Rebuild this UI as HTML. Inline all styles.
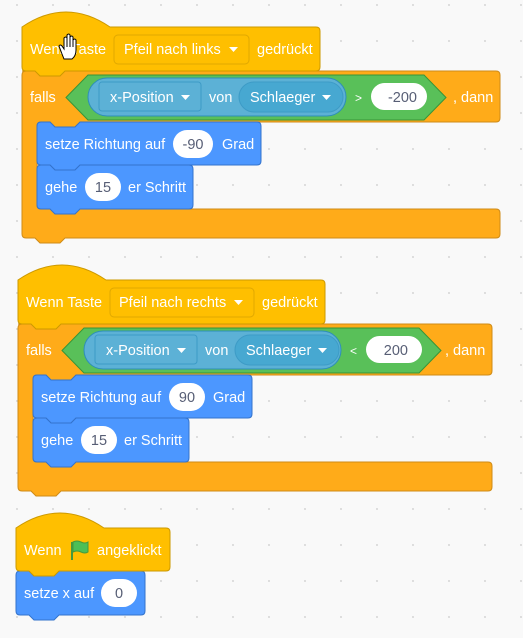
<!DOCTYPE html>
<html><head><meta charset="utf-8"><style>
html,body{margin:0;padding:0}
body{width:523px;height:638px;overflow:hidden;background-color:#f9f9f9;
background-image:radial-gradient(circle,#d9d9d9 0.9px,transparent 1.2px);
background-size:36px 36px;background-position:-1px -13px}
svg{position:absolute;left:0;top:0}
text{font-family:"Liberation Sans",Arial,sans-serif;font-size:14.5px;fill:#fff}
.d{fill:#575e75}
</style></head><body>
<svg width="523" height="638" viewBox="0 0 523 638">
<!-- Script 1 -->
<path d="M22,71 H496 Q500,71 500,75 V118 Q500,122 496,122 H80 l-5,5 h-20 l-5,-5 H41 Q37,122 37,126 V205 Q37,209 41,209 H496 Q500,209 500,213 V234 Q500,238 496,238 H65 l-5,5 h-20 l-5,-5 H26 Q22,238 22,234 V75 Q22,71 26,71 Z" fill="#ffab19" stroke="#cf8b17"/>
<path d="M22,27 Q66,-3 110,27 H316 Q320,27 320,31 V67 Q320,71 316,71 H65 l-5,5 h-20 l-5,-5 H26 Q22,71 22,67 Z" fill="#ffbf00" stroke="#cc9900"/>
<rect x="114" y="35" width="135" height="29" rx="4" fill="#ffbf00" stroke="#e0a800"/>
<text x="30" y="54">Wenn Taste</text>
<text x="124" y="54">Pfeil nach links</text>
<path d="M229,47 h9 l-4.5,5 z" fill="#fff"/>
<text x="257" y="54">gedrückt</text>
<text x="30" y="102">falls</text>
<path d="M66,97.5 L88,75 H424 L446,97.5 L424,120 H88 Z" fill="#59c059" stroke="#389438"/>
<rect x="88" y="78" width="258" height="38" rx="19" fill="#5cb1d6" stroke="#2e8eb8"/>
<rect x="99" y="82" width="102" height="29" rx="3" fill="#5cb1d6" stroke="#3d9bc6"/>
<text x="110" y="102">x-Position</text>
<path d="M181,95 h9 l-4.5,5 z" fill="#fff"/>
<text x="209" y="102">von</text>
<rect x="239" y="82" width="104" height="30" rx="15" fill="#47a8d1" stroke="#3d9bc6"/>
<text x="250" y="102">Schlaeger</text>
<path d="M322,95 h9 l-4.5,5 z" fill="#fff"/>
<text x="355" y="102" style="font-size:12px">&gt;</text>
<rect x="371" y="83" width="56" height="27" rx="13.5" fill="#fff"/>
<text x="417" y="102" class="d" text-anchor="end">-200</text>
<text x="453" y="102">, dann</text>
<path d="M37,126 Q37,122 41,122 H50 l5,5 h20 l5,-5 H257 Q261,122 261,126 V161 Q261,165 257,165 H80 l-5,5 h-20 l-5,-5 H41 Q37,165 37,161 Z" fill="#4c97ff" stroke="#3373cc"/>
<text x="45" y="149">setze Richtung auf</text>
<rect x="173" y="130" width="40" height="28" rx="14" fill="#fff"/>
<text x="193" y="149" class="d" text-anchor="middle">-90</text>
<text x="222" y="149">Grad</text>
<path d="M37,169 Q37,165 41,165 H50 l5,5 h20 l5,-5 H189 Q193,165 193,169 V205 Q193,209 189,209 H80 l-5,5 h-20 l-5,-5 H41 Q37,209 37,205 Z" fill="#4c97ff" stroke="#3373cc"/>
<text x="45" y="192">gehe</text>
<rect x="85" y="173" width="36" height="28" rx="14" fill="#fff"/>
<text x="103" y="192" class="d" text-anchor="middle">15</text>
<text x="128" y="192">er Schritt</text>
<!-- hand cursor -->
<path d="M62,54 l-3,-8 q1,-2 3,0 l2,3 v-11 q2,-2 3,0 v9 v-12 q2,-2 3,0 v12 v-10 q2,-2 3,0 v10 v-7 q2,-2 3,0 v10 q0,6 -4,9 h-8 z" fill="#fff" stroke="#000" stroke-width="1"/>

<!-- Script 2 -->
<path d="M18,324 H488 Q492,324 492,328 V371 Q492,375 488,375 H76 l-5,5 h-20 l-5,-5 H37 Q33,375 33,379 V458 Q33,462 37,462 H488 Q492,462 492,466 V487 Q492,491 488,491 H61 l-5,5 h-20 l-5,-5 H22 Q18,491 18,487 V328 Q18,324 22,324 Z" fill="#ffab19" stroke="#cf8b17"/>
<path d="M18,280 Q62,250 106,280 H321 Q325,280 325,284 V320 Q325,324 321,324 H61 l-5,5 h-20 l-5,-5 H22 Q18,324 18,320 Z" fill="#ffbf00" stroke="#cc9900"/>
<rect x="110" y="288" width="144" height="29" rx="4" fill="#ffbf00" stroke="#e0a800"/>
<text x="26" y="307">Wenn Taste</text>
<text x="119" y="307">Pfeil nach rechts</text>
<path d="M234,300 h9 l-4.5,5 z" fill="#fff"/>
<text x="262" y="307">gedrückt</text>
<text x="26" y="355">falls</text>
<path d="M62,350.5 L84,328 H419 L441,350.5 L419,373 H84 Z" fill="#59c059" stroke="#389438"/>
<rect x="84" y="331" width="257" height="38" rx="19" fill="#5cb1d6" stroke="#2e8eb8"/>
<rect x="95" y="335" width="102" height="29" rx="3" fill="#5cb1d6" stroke="#3d9bc6"/>
<text x="106" y="355">x-Position</text>
<path d="M177,348 h9 l-4.5,5 z" fill="#fff"/>
<text x="205" y="355">von</text>
<rect x="235" y="335" width="104" height="30" rx="15" fill="#47a8d1" stroke="#3d9bc6"/>
<text x="246" y="355">Schlaeger</text>
<path d="M318,348 h9 l-4.5,5 z" fill="#fff"/>
<text x="350" y="355" style="font-size:12px">&lt;</text>
<rect x="366" y="336" width="56" height="27" rx="13.5" fill="#fff"/>
<text x="408" y="355" class="d" text-anchor="end">200</text>
<text x="445" y="355">, dann</text>
<path d="M33,379 Q33,375 37,375 H46 l5,5 h20 l5,-5 H248 Q252,375 252,379 V414 Q252,418 248,418 H76 l-5,5 h-20 l-5,-5 H37 Q33,418 33,414 Z" fill="#4c97ff" stroke="#3373cc"/>
<text x="41" y="402">setze Richtung auf</text>
<rect x="169" y="383" width="36" height="28" rx="14" fill="#fff"/>
<text x="187" y="402" class="d" text-anchor="middle">90</text>
<text x="213" y="402">Grad</text>
<path d="M33,422 Q33,418 37,418 H46 l5,5 h20 l5,-5 H185 Q189,418 189,422 V458 Q189,462 185,462 H76 l-5,5 h-20 l-5,-5 H37 Q33,462 33,458 Z" fill="#4c97ff" stroke="#3373cc"/>
<text x="41" y="445">gehe</text>
<rect x="81" y="426" width="36" height="28" rx="14" fill="#fff"/>
<text x="99" y="445" class="d" text-anchor="middle">15</text>
<text x="124" y="445">er Schritt</text>

<!-- Script 3 -->
<path d="M16,575 Q16,571 20,571 H29 l5,5 h20 l5,-5 H141 Q145,571 145,575 V611 Q145,615 141,615 H59 l-5,5 h-20 l-5,-5 H20 Q16,615 16,611 Z" fill="#4c97ff" stroke="#3373cc"/>
<path d="M16,528 Q60,498 104,528 H166 Q170,528 170,532 V567 Q170,571 166,571 H59 l-5,5 h-20 l-5,-5 H20 Q16,571 16,567 Z" fill="#ffbf00" stroke="#cc9900"/>
<text x="24" y="555">Wenn</text>
<path d="M72,542 v18" stroke="#45993d" stroke-width="2"/>
<path d="M73,542 q4,-2 8,0 q4,2 7,0 v10 q-3,2 -7,0 q-4,-2 -8,0 z" fill="#4cbf56" stroke="#45993d"/>
<text x="97" y="555">angeklickt</text>
<text x="24" y="598">setze x auf</text>
<rect x="101" y="579" width="36" height="28" rx="14" fill="#fff"/>
<text x="119" y="598" class="d" text-anchor="middle">0</text>
</svg>
</body></html>
